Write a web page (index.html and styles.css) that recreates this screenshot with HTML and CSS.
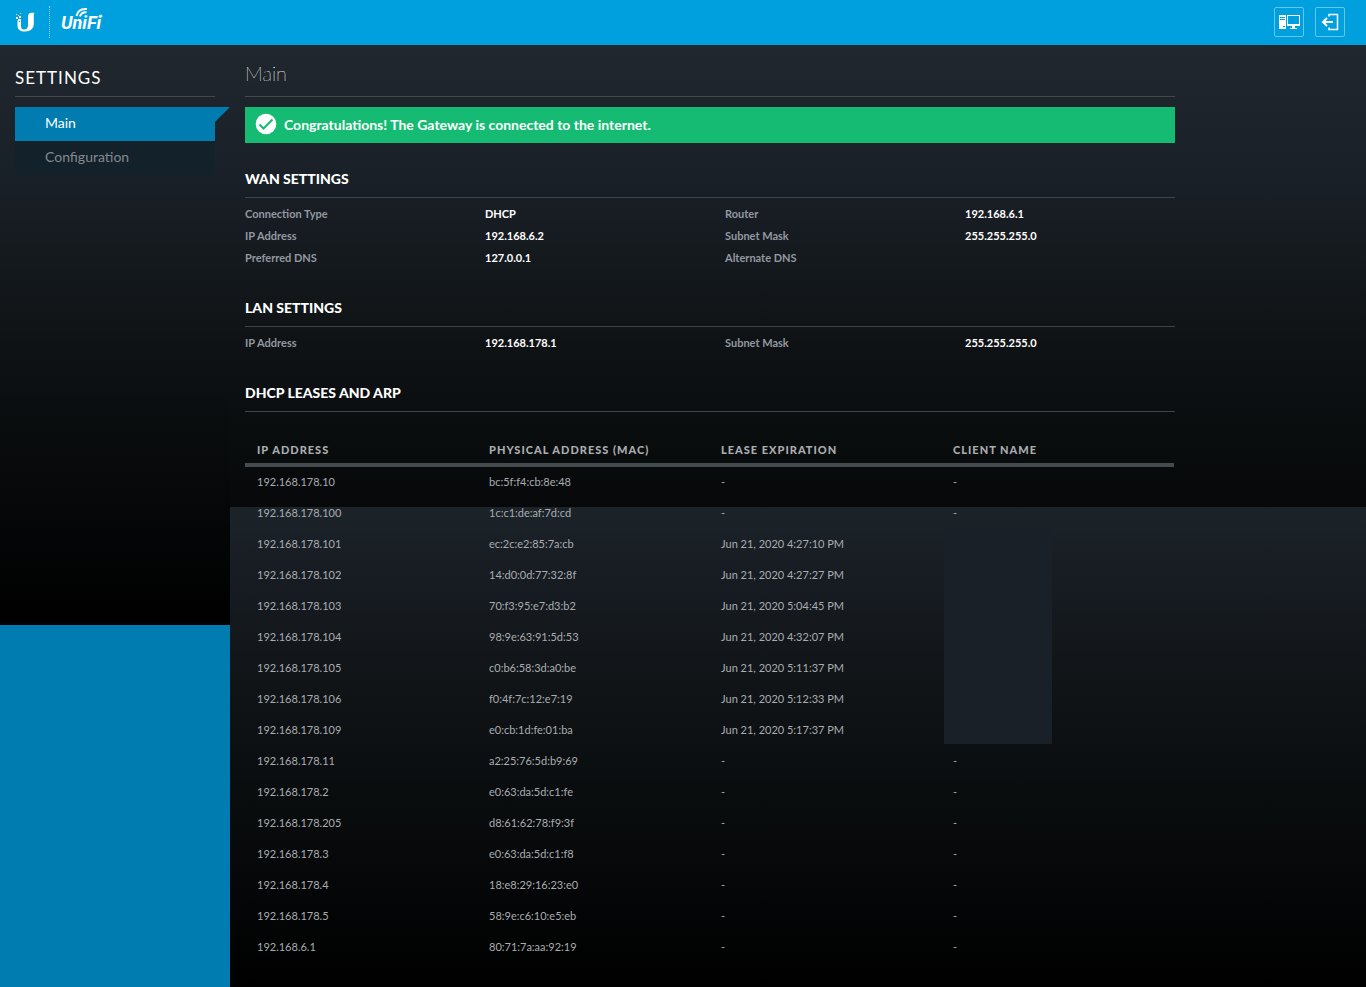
FILE: index.html
```
<!DOCTYPE html>
<html lang="en">
<head>
    <meta charset="UTF-8">
    <meta name="viewport" content="width=device-width, initial-scale=1.0">
    <title>UniFi Gateway</title>
    <link rel="stylesheet" href="styles.css">
</head>
<body>
    <header class="topbar">
        <a href="#" class="brand" aria-label="UniFi">
            <svg class="brand-mark" width="20" height="22" viewBox="0 0 20 22" fill="#fff" aria-hidden="true">
                <path d="M6 9v6c0 2.500 1.200 3.500 3 3.500 2.600 0 4-1.500 4-4.500V5.500C13 3 14.300 1.700 16.500 1.700h3L18.800 3v9.500c0 5.300-3.300 8-8.800 8-4.700 0-7.500-2-7.500-6V9.500h1.500V11h1V9z"/>
                <path d="M1 3h1v1H1zM5 2h1v1H5zM3 4h1v1H3zM1 6h2v2H1zM4 5h2v2H4zM3 8h2v2H3zM5 8h1v1H5z"/>
            </svg>
            <span class="brand-line"></span>
            <svg class="brand-name" width="52" height="28" viewBox="0 0 52 28" fill="none" stroke="#fff" aria-hidden="true">
                <text x="0" y="24" class="brand-text">UniFi</text>
                <path stroke-width="2" d="M15.500 11c1-5 5-7.500 10.500-7M19 11.500c.8-3 3-4.500 6.500-4.300"/>
                <circle cx="40" cy="11" r="1" stroke-width="1"/>
            </svg>
        </a>
        <div class="actions">
            <button class="icon-button" aria-label="Device">
                <svg width="22" height="16" viewBox="0 0 22 16" aria-hidden="true">
                    <path fill="#fff" d="M1 1h7v14H1z"/>
                    <path stroke="#00a0df" d="M2 3.500h5M2 5.500h5M5 12.500h2"/>
                    <path fill="#fff" fill-rule="evenodd" d="M9 1h13v11H9zM10 2v8h11V2zM14 12h3v2h2v1h-7v-1h2z"/>
                </svg>
            </button>
            <button class="icon-button" aria-label="Log out">
                <svg width="18" height="18" viewBox="0 0 18 18" fill="none" stroke="#fff" aria-hidden="true">
                    <path stroke-width="1.500" d="M8 3.500v-2h8.500v15H8v-2"/>
                    <path stroke-width="2" d="M12 9H2M6 5L2 9l4 4"/>
                </svg>
            </button>
        </div>
    </header>

    <div class="layout">
        <aside class="sidebar">
            <h2 class="sidebar-title">SETTINGS</h2>
            <nav class="menu">
                <a href="#" class="menu-item active">Main</a>
                <a href="#" class="menu-item">Configuration</a>
            </nav>
        </aside>

        <main class="content">
            <h1 class="page-title">Main</h1>

            <div class="alert">
                <svg width="22" height="22" viewBox="0 0 22 22" aria-hidden="true">
                    <circle cx="11" cy="11" r="10.300" fill="#fff"/>
                    <path fill="none" stroke="#15bb72" stroke-width="2" d="M4.500 11.500l4 4 9-9"/>
                </svg>
                <span>Congratulations! The Gateway is connected to the internet.</span>
            </div>

            <!-- WAN -->
            <section class="section">
                <h3 class="section-title">WAN SETTINGS</h3>
                <dl class="info">
                    <dt>Connection Type</dt><dd>DHCP</dd>
                    <dt>Router</dt><dd>192.168.6.1</dd>
                    <dt>IP Address</dt><dd>192.168.6.2</dd>
                    <dt>Subnet Mask</dt><dd>255.255.255.0</dd>
                    <dt>Preferred DNS</dt><dd>127.0.0.1</dd>
                    <dt>Alternate DNS</dt><dd></dd>
                </dl>
            </section>

            <!-- LAN -->
            <section class="section">
                <h3 class="section-title">LAN SETTINGS</h3>
                <dl class="info">
                    <dt>IP Address</dt><dd>192.168.178.1</dd>
                    <dt>Subnet Mask</dt><dd>255.255.255.0</dd>
                </dl>
            </section>

            <!-- Leases -->
            <section class="section">
                <h3 class="section-title">DHCP LEASES AND ARP</h3>
                <table class="leases">
                    <thead>
                        <tr><th>IP ADDRESS</th><th>PHYSICAL ADDRESS (MAC)</th><th>LEASE EXPIRATION</th><th>CLIENT NAME</th></tr>
                    </thead>
                    <tbody>
                        <tr><td>192.168.178.10</td><td>bc:5f:f4:cb:8e:48</td><td>-</td><td>-</td></tr>
                        <tr><td>192.168.178.100</td><td>1c:c1:de:af:7d:cd</td><td>-</td><td>-</td></tr>
                        <tr><td>192.168.178.101</td><td>ec:2c:e2:85:7a:cb</td><td>Jun 21, 2020 4:27:10 PM</td><td class="hidden-names" rowspan="7"></td></tr>
                        <tr><td>192.168.178.102</td><td>14:d0:0d:77:32:8f</td><td>Jun 21, 2020 4:27:27 PM</td></tr>
                        <tr><td>192.168.178.103</td><td>70:f3:95:e7:d3:b2</td><td>Jun 21, 2020 5:04:45 PM</td></tr>
                        <tr><td>192.168.178.104</td><td>98:9e:63:91:5d:53</td><td>Jun 21, 2020 4:32:07 PM</td></tr>
                        <tr><td>192.168.178.105</td><td>c0:b6:58:3d:a0:be</td><td>Jun 21, 2020 5:11:37 PM</td></tr>
                        <tr><td>192.168.178.106</td><td>f0:4f:7c:12:e7:19</td><td>Jun 21, 2020 5:12:33 PM</td></tr>
                        <tr><td>192.168.178.109</td><td>e0:cb:1d:fe:01:ba</td><td>Jun 21, 2020 5:17:37 PM</td></tr>
                        <tr><td>192.168.178.11</td><td>a2:25:76:5d:b9:69</td><td>-</td><td>-</td></tr>
                        <tr><td>192.168.178.2</td><td>e0:63:da:5d:c1:fe</td><td>-</td><td>-</td></tr>
                        <tr><td>192.168.178.205</td><td>d8:61:62:78:f9:3f</td><td>-</td><td>-</td></tr>
                        <tr><td>192.168.178.3</td><td>e0:63:da:5d:c1:f8</td><td>-</td><td>-</td></tr>
                        <tr><td>192.168.178.4</td><td>18:e8:29:16:23:e0</td><td>-</td><td>-</td></tr>
                        <tr><td>192.168.178.5</td><td>58:9e:c6:10:e5:eb</td><td>-</td><td>-</td></tr>
                        <tr><td>192.168.6.1</td><td>80:71:7a:aa:92:19</td><td>-</td><td>-</td></tr>
                    </tbody>
                </table>
            </section>
        </main>
    </div>
</body>
</html>
```

FILE: styles.css
```
* {
    box-sizing: border-box;
}
body {
    display: flex;
    flex-direction: column;
    min-height: 100vh;
    margin: 0;
    background-color: #007cb0;
    color: #fff;
    font-family: Lato, sans-serif;
    font-size: 11px;
}
h1, h2, h3, dl, dd {
    margin: 0;
}
a {
    color: inherit;
    text-decoration: none;
}

/* Top bar */
.topbar {
    display: flex;
    justify-content: space-between;
    align-items: center;
    height: 45px;
    padding: 0 21px 1px 15px;
    background-color: #00a0df;
}
.brand {
    display: flex;
    align-items: center;
}
.brand-line {
    height: 32px;
    margin: 0 11px 0 14px;
    border-left: 1px dotted #8fd4f1;
}
.brand-name {
    margin-bottom: 6px;
}
.brand-text {
    fill: #fff;
    stroke: none;
    font: italic 700 18px Roboto, sans-serif;
}
.actions {
    display: flex;
    gap: 11px;
}
.icon-button {
    display: flex;
    align-items: center;
    justify-content: center;
    width: 30px;
    height: 30px;
    padding: 0;
    border: 1px solid #66c6ec;
    border-radius: 2px;
    background: none;
    cursor: pointer;
}

/* Sidebar */
.layout {
    display: flex;
    flex: 1;
}
.sidebar {
    width: 230px;
    padding: 0 15px;
    background: linear-gradient(#20272e, #191f26 25%, #0f1315 50%, #060809 77%, #000) no-repeat;
    background-size: 100% 580px;
}
.sidebar-title {
    padding: 21px 0 6px;
    border-bottom: 1px solid #42494d;
    font-size: 17px;
    font-weight: 400;
    line-height: 24px;
    letter-spacing: 1px;
}
.menu {
    margin-top: 10px;
}
.menu-item {
    display: block;
    position: relative;
    padding: 0 30px 2px;
    background-color: #12212a;
    color: #84898d;
    font-size: 14px;
    line-height: 32px;
}
.menu-item.active {
    background-color: #007cb0;
    color: #fff;
}
.menu-item.active::after {
    content: "";
    position: absolute;
    top: 0;
    left: 100%;
    border-top: 15px solid #007cb0;
    border-right: 15px solid transparent;
}

/* Content */
.content {
    flex: 1;
    padding: 0 15px 24px;
    background: linear-gradient(#20272e, #191f26 145px, #0f1315 290px, #060809 462px, #1c2329 462px, #181d24 520px, #0e1214 670px, #060809 820px, #000 940px);
}
.page-title {
    max-width: 930px;
    padding: 16px 0 11px;
    border-bottom: 1px solid #42494d;
    font-size: 20px;
    font-weight: 100;
    line-height: 24px;
    text-shadow: 0 0 #fff;
}
.alert {
    display: flex;
    align-items: center;
    gap: 7px;
    max-width: 930px;
    height: 36px;
    margin-top: 10px;
    padding: 0 10px 2px;
    background-color: #15bb72;
    font-size: 14px;
    font-weight: 700;
}
.section {
    max-width: 930px;
    padding-top: 26px;
}
.section-title {
    padding-bottom: 8px;
    border-bottom: 1px solid #3a4649;
    font-size: 14px;
    font-weight: 900;
    line-height: 20px;
}
.info {
    display: grid;
    grid-template-columns: repeat(4, 240px);
    margin-right: -30px;
    padding: 5px 0 3px;
    line-height: 22px;
}
.info dt {
    color: #9398a1;
    font-weight: 700;
}
.info dd {
    min-height: 22px;
    font-weight: 700;
}

/* DHCP leases table */
.leases {
    width: 929px;
    margin-top: 25px;
    border-spacing: 0;
    table-layout: fixed;
    color: #a9adb0;
    text-align: left;
}
.leases th {
    height: 30px;
    padding: 0 12px 2px;
    border-bottom: 4px solid #444b4e;
    font-weight: 900;
    letter-spacing: 1px;
}
.leases th:not(:last-child) {
    width: 232px;
}
.leases td {
    height: 31px;
    padding: 0 12px 2px;
}
.leases .hidden-names {
    background: linear-gradient(#1a2027, #1a2027) 3px 0 / 108px calc(100% - 2px) no-repeat;
}
```
